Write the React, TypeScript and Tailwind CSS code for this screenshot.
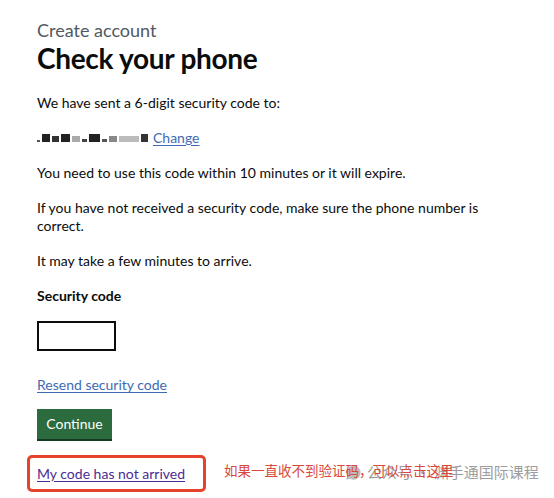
import { MessageCircle } from 'lucide-react';

const blurBlocks = [
  { w: 3, c: 'bg-[#555]', h: 'h-[2px]' },
  { w: 8, c: 'bg-[#222]', h: 'h-[8px]' },
  { w: 7, c: 'bg-[#333]', h: 'h-[6px]' },
  { w: 9, c: 'bg-[#222]', h: 'h-[8px]' },
  { w: 8, c: 'bg-[#aaa]', h: 'h-[6px]' },
  { w: 5, c: 'bg-[#444]', h: 'h-[3px]' },
  { w: 11, c: 'bg-[#222]', h: 'h-[8px]' },
  { w: 5, c: 'bg-[#555]', h: 'h-[3px]' },
  { w: 8, c: 'bg-[#888]', h: 'h-[6px]' },
  { w: 20, c: 'bg-[#bbb]', h: 'h-[6px]' },
  { w: 7, c: 'bg-[#333]', h: 'h-[8px]' },
];

export default function App() {
  return (
    <div className="relative w-[554px] h-[498px] bg-white overflow-hidden font-['Lato','Liberation_Sans',sans-serif] text-[#0b0c0c]">
      {/* watermark sits under the page content */}
      <div className="absolute left-[345px] top-[462px] flex items-center gap-[5px] text-[#9d9d9d] font-['Noto_Sans_CJK_SC',sans-serif] text-[15px] leading-[20px]">
        <MessageCircle className="w-[17px] h-[17px]" fill="#bdbdbd" strokeWidth={0} />
        <span>公众号 · 渊手通国际课程</span>
      </div>

      <div className="relative flex flex-col items-start pl-[37px] pt-[18px]">
        <p className="text-[18px] leading-[24px] text-[#505a5f]">Create account</p>
        <h1 className="text-[28px] leading-[32px] font-bold tracking-[-0.3px]">Check your phone</h1>

        <p className="mt-[20px] text-[14px] leading-[18px]">We have sent a 6-digit security code to:</p>

        <div className="mt-[17px] flex items-center h-[18px] text-[14px] leading-[18px]">
          <div className="flex items-end gap-[2px] blur-[0.7px] mr-[5px]">
            {blurBlocks.map((b, i) => (
              <span key={i} className={`block ${b.c} ${b.h}`} style={{ width: b.w }} />
            ))}
          </div>
          <a className="text-[#3d6bb3] underline underline-offset-2">Change</a>
        </div>

        <p className="mt-[17px] text-[14px] leading-[18px]">You need to use this code within 10 minutes or it will expire.</p>
        <p className="mt-[17px] w-[470px] text-[14px] leading-[18px]">
          If you have not received a security code, make sure the phone number is correct.
        </p>
        <p className="mt-[17px] text-[14px] leading-[18px]">It may take a few minutes to arrive.</p>

        <p className="mt-[17px] text-[14px] leading-[18px] font-bold">Security code</p>
        <div className="mt-[16px] w-[79px] h-[30px] border-2 border-[#0b0c0c] bg-white" />

        <a className="mt-[25px] text-[14px] leading-[18px] text-[#3d6bb3] underline underline-offset-2">
          Resend security code
        </a>

        <button className="mt-[15px] w-[75px] h-[30px] bg-[#2b6b3d] text-white text-[14px] leading-[18px] shadow-[0_2px_0_#143a22]">
          Continue
        </button>

        <div className="mt-[16px] -ml-[10px] flex items-center">
          <div className="w-[179px] h-[37px] border-[3px] border-[#e5432c] rounded-[5px] flex items-center pl-[7px]">
            <a className="text-[14px] leading-[18px] text-[#4c2c92] underline underline-offset-2">My code has not arrived</a>
          </div>
          <span className="ml-[18px] -mt-[6px] text-[13.5px] text-[#d9483a] font-['Noto_Sans_CJK_SC',sans-serif]">
            如果一直收不到验证码，可以点击这里
          </span>
        </div>
      </div>
    </div>
  );
}
